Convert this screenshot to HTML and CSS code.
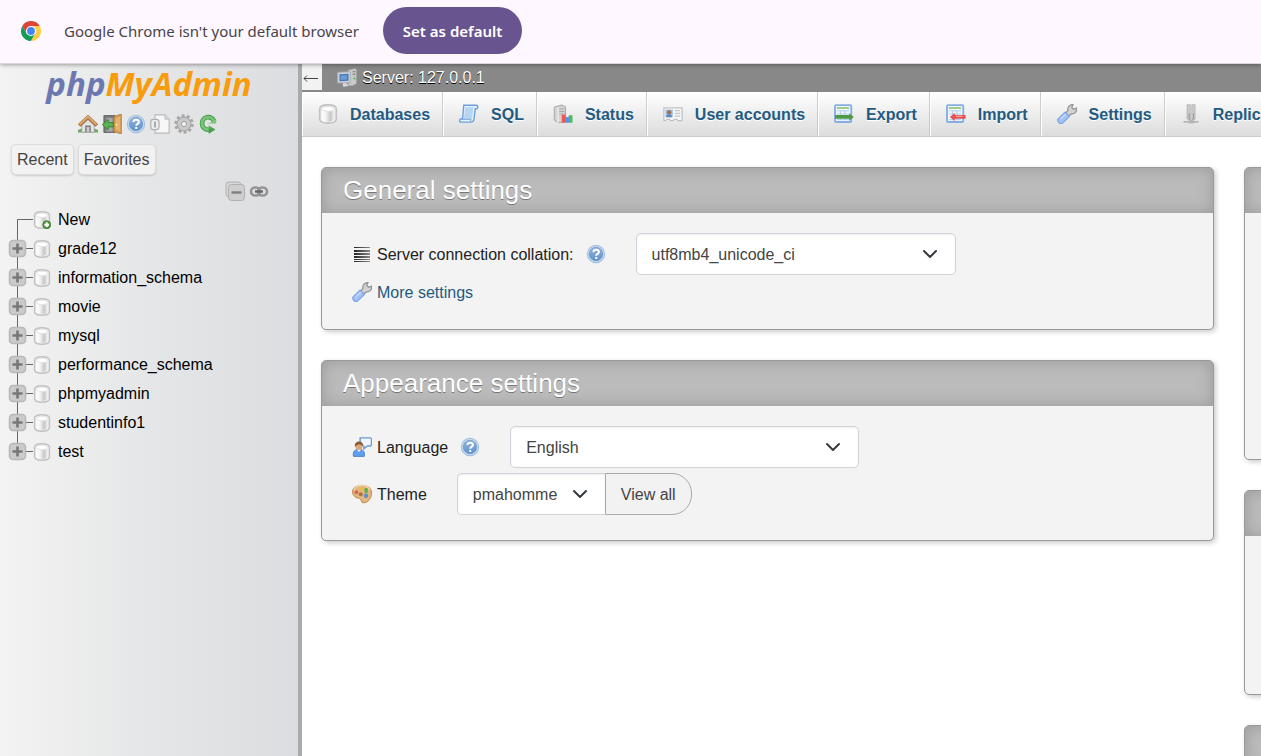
FILE: index.html
```html
<!DOCTYPE html>
<html lang="en">
<head>
<meta charset="utf-8">
<title>127.0.0.1 | phpMyAdmin</title>
<link rel="stylesheet" href="styles.css">
</head>
<body>
<svg class="defs" aria-hidden="true">
  <defs>
    <linearGradient id="gDb" x1="0" x2="1"><stop offset="0" stop-color="#fff"/><stop offset=".35" stop-color="#f0f0f0"/><stop offset=".7" stop-color="#c8c8c8"/><stop offset="1" stop-color="#ececec"/></linearGradient>
    <linearGradient id="gBlue" x1="0" y1="0" x2="0" y2="1"><stop offset="0" stop-color="#8fb4dd"/><stop offset="1" stop-color="#5f92cb"/></linearGradient>
    <linearGradient id="gGreen" x1="0" y1="0" x2="0" y2="1"><stop offset="0" stop-color="#8fd08a"/><stop offset="1" stop-color="#2f8f35"/></linearGradient>
    <linearGradient id="gLines" x1="0" x2="1"><stop offset="0" stop-color="#222"/><stop offset="1" stop-color="#888"/></linearGradient>
    <symbol id="db" viewBox="0 0 16 16"><path d="M1.400 3.600C1.600 1.700 4.500.7 8 .7s6.400 1 6.600 2.900v8.800c-.2 1.900-3.100 2.900-6.600 2.900s-6.400-1-6.600-2.900z" fill="#f2f2f2" stroke="#c2c2c2" stroke-width="1.300"/><path d="M3.200 4.800v7.400c0 1 2.100 2 4.800 2s4.800-1 4.800-2V4.800c-2 1.700-7.600 1.700-9.600 0z" fill="url(#gDb)"/><ellipse cx="8" cy="3.900" rx="4.900" ry="1.900" fill="#fff" stroke="#d4d4d4" stroke-width=".5"/></symbol>
    <symbol id="dbnew" viewBox="0 0 16 16"><use href="#db"/><circle cx="12.200" cy="12.200" r="3.500" fill="#5c9b40" stroke="#39752a" stroke-width=".8"/><path d="M12.200 10.100v4.200M10.100 12.200h4.200" stroke="#fff" stroke-width="1.600"/></symbol>
    <symbol id="home" viewBox="0 0 16 16"><path d="M0 14.800h16v-2l-3-1.300H3l-3 1.300z" fill="#6aab5c"/><path d="M3 7.500 8 3l5 4.500v7H3z" fill="#e3e3e3" stroke="#999" stroke-width=".6"/><path d="M5.800 14.600v-5.400h4.400v5.400z" fill="#777"/><path d="M6.900 14.600v-4.300h2.200v4.300z" fill="#ccc"/><path d="M1 9.200 8 2.700l7 6.500" fill="none" stroke="#a9713c" stroke-width="3"/><path d="M1.300 8.400 8 2.200l6.700 6.200" fill="none" stroke="#dda871" stroke-width="1.400"/></symbol>
    <symbol id="exit" viewBox="0 0 16 16"><path d="M1.500 1.200h9v13.600h-9z" fill="#777" stroke="#666" stroke-width=".7"/><path d="M3.500 3h5v11h-5z" fill="#a8a8a8"/><path d="M15.500 0v16L9.500 14.200V2z" fill="#d79a52" stroke="#b07a3a" stroke-width=".6"/><path d="M14.500 2v12l-3.600-1.200V3.200z" fill="#e4b36f"/><circle cx="11.500" cy="8.500" r=".8" fill="#fff0a8"/><path d="M.3 8.500 5 4.300v2.500h4v3.500H5v2.500z" fill="#5bb254" stroke="#31832b" stroke-width=".7"/></symbol>
    <symbol id="help" viewBox="0 0 16 16"><circle cx="8" cy="8" r="6.900" fill="#cfdff1" stroke="#a3bfdf" stroke-width=".9"/><circle cx="8" cy="8" r="5.400" fill="url(#gBlue)" stroke="#5f8dc2" stroke-width=".5"/><path d="M5.900 6.500c.1-2.700 4.400-2.500 4.400-.1 0 1.500-2.100 1.500-2.100 2.900M8.200 10.400v1.500" fill="none" stroke="#fff" stroke-width="1.600"/></symbol>
    <symbol id="doc" viewBox="0 0 16 16"><path d="M4 .7h8l3.300 3.400v11.200H4z" fill="#f7f7f7" stroke="#b9b9b9" stroke-width=".9"/><path d="M12 .7v3.400h3.300" fill="#ddd" stroke="#b9b9b9" stroke-width=".7"/><rect x=".6" y="4.200" width="6.600" height="8.200" rx="2" fill="#eee" stroke="#b0b0b0"/><path d="M4 6v4.700" stroke="#a8a8a8" stroke-width="1.500"/></symbol>
    <symbol id="gear" viewBox="0 0 16 16"><circle cx="8" cy="8" r="6.600" fill="none" stroke="#a6a6a6" stroke-width="2.400" stroke-dasharray="2.300 1.850"/><circle cx="8" cy="8" r="4" fill="none" stroke="#c9c9c9" stroke-width="3.400"/><circle cx="8" cy="8" r="5.500" fill="none" stroke="#a8a8a8" stroke-width=".9"/><circle cx="8" cy="8" r="2.100" fill="#eee" stroke="#a0a0a0" stroke-width=".8"/></symbol>
    <symbol id="reload" viewBox="0 0 16 16"><path d="M13 6A5 5 0 1 0 8.500 12.500" fill="none" stroke="#3f9a44" stroke-width="3.800"/><path d="M12.800 6A4.900 4.900 0 1 0 8.500 12.300" fill="none" stroke="#7cc578" stroke-width="2.300"/><path d="M7.500 7.500h7v-3l-2 1.500zM8.500 9l5.500 3.300-5.500 3.500z" fill="url(#gGreen)"/></symbol>
    <symbol id="server" viewBox="0 0 16 16"><path d="M9 1.500 14.500.4l1.200 1v11l-3 1.800H9z" fill="#c9c9c9" stroke="#999" stroke-width=".5"/><path d="M12.500 3h2.200M12.500 5h2.200" stroke="#777" stroke-width=".8"/><circle cx="14" cy="8.300" r=".8" fill="#43bb40"/><path d="M.5 3.500 10.500 3v8.500L.5 12z" fill="#d0d5db" stroke="#a5acb3" stroke-width=".7"/><path d="M2 5l7.200-.4v5.600l-7.200.4z" fill="#4679b8"/><path d="M3 6l5-.3v3.500l-5 .3z" fill="#6f9bd2"/><path d="M4.500 12h3l2 2.200-4.500 1z" fill="#d5d5d5"/></symbol>
    <symbol id="sql" viewBox="0 0 16 16"><path d="M3.800 1h10c1.800.1 1.700 3.300-.8 3l-1 8c-.2 2-1 2.500-2.500 2.500H1.300c-1.300-.5-.8-2.700.6-2.700h1z" fill="#e3effc" stroke="#6f9fd8" stroke-width="1.100"/><path d="M5 2.600h6.500l-1.200 9.200H4z" fill="#b7d5f5"/><path d="M2 12.200h7.500c0 1.200-.5 1.700-1.200 1.800" fill="#edf5fe" stroke="#6f9fd8" stroke-width=".8"/></symbol>
    <symbol id="status" viewBox="0 0 16 16"><path d="M1 2.500 7 .8l3 1.400v12L4.500 15 1 12.800z" fill="#d3d3d3" stroke="#a8a8a8" stroke-width=".8"/><path d="M4 2.500V15" stroke="#efefef"/><path d="M5 4h4M5 6h4M5 8h4" stroke="#aaa" stroke-width=".8"/><path d="M7 8.500h3V15H7z" fill="#f0584f"/><path d="M12.600 9h3v6h-3z" fill="#4fbb5c"/><path d="M9.600 10.500h3.200V15H9.600z" fill="#5592ee"/></symbol>
    <symbol id="users" viewBox="0 0 16 16"><path d="M.7 3h14.600v10.300H12l-.8-1H9l-.8 1H6l-.8-1H3l-.8 1H.7z" fill="#f7f7f7" stroke="#c2c2c2"/><path d="M2 4.500h5.800v6H2z" fill="#8fbce9"/><circle cx="4.900" cy="6.600" r="1.700" fill="#a87048"/><path d="M2.700 10.500c0-3 4.400-3 4.400 0z" fill="#5b82ba"/><path d="M9.500 5.300h4.200M9.500 7.500h4.200M9.500 9.700h4.200" stroke="#c0c6cc"/></symbol>
    <symbol id="sheet" viewBox="0 0 16 16"><rect x=".8" y=".9" width="13" height="13.500" rx=".8" fill="#f0f6fd" stroke="#86aee5" stroke-width="1.500"/><path d="M2.300 3.200h9.800" stroke="#92c270" stroke-width="1.300"/><path d="M2.500 5.500h9.500M2.500 8h9.500M2.500 12.500h9.500M5.200 5v8M8.700 5v8" stroke="#b4cdeb" stroke-width=".8"/></symbol>
    <symbol id="export" viewBox="0 0 16 16"><use href="#sheet"/><path d="M.8 8.800h11.400V7.300l3.600 3-3.600 3v-1.600H.8z" fill="#4e9a43"/></symbol>
    <symbol id="import" viewBox="0 0 16 16"><use href="#sheet"/><path d="M15.700 8.800v2.900H7v1.800l-4-3.200 4-3.200v1.700z" fill="#e95050"/><path d="M8 9.900h5" stroke="#f5a09c"/></symbol>
    <symbol id="wrench" viewBox="0 0 16 16"><path d="m7 7.300 1.700-2.200C8.300 2.500 10 .4 12.800.4l-1 2.300 1.500 1.500 2.300-.9c.5 2.700-1.300 4.800-4 4.600L9.300 9.600z" fill="#d2d2d2" stroke="#939393"/><path d="M1 11.700 6.500 6.500l3.400 3.400-5.200 5.200c-2 1.700-5.300-1.300-3.700-3.400z" fill="#a4c1f3" stroke="#7ea2e4" stroke-width=".9"/><path d="m2.800 12 4.200-3.800" stroke="#c4d8fc" stroke-width="1.300"/></symbol>
    <symbol id="replic" viewBox="0 0 16 16"><path d="M4.800.5h2.700v11.700H4.800zM8.600.5h2.700v11.700H8.600z" fill="#c9c9c9" stroke="#acacac" stroke-width=".5"/><path d="M6.500 7.500v4.500l1.700 1.200L10 12V7.500" fill="none" stroke="#969696" stroke-width=".8"/><path d="M2 14.300h12" stroke="#b4b4b4" stroke-width="1.400"/><path d="M6 13h4.500v2.500H6z" fill="#b4b4b4"/></symbol>
    <symbol id="lines" viewBox="0 0 16 16"><path d="M1.600 2.400h12.800v.8H1.600zM1.600 4.800h12.800v1.600H1.600zM1.600 7.200h12.800v1.600H1.600zM1.600 9.600h12.800v1.600H1.600zM1.600 12h12.800v.8H1.600zM1.600 13.600h12.800v.8H1.600z" fill="url(#gLines)"/></symbol>
    <symbol id="lang" viewBox="0 0 16 16"><path d="M6.500.7h8.200q1 .3.900 1.300v4q-.2 1-1.200 1.200h-2L9.500 9.500V7.300L6.500 6z" fill="#eef5ff" stroke="#6c99d0" stroke-width="1.100"/><path d="M1.200 15.500C.3 11.500 2.500 9.800 5.500 9.800s5.200 1.700 4.300 5.700z" fill="#5f9fed" stroke="#3a74bf" stroke-width=".6"/><path d="m4 10 1.500 2L7.200 10z" fill="#fff"/><circle cx="5.600" cy="7.500" r="2.800" fill="#dba87b"/><path d="M2.300 7.700C1.700 2.800 8.800 2.200 9 7 7 6.700 6 5.500 5 6 4 6.300 3.200 7 2.300 7.700z" fill="#8c5a32"/></symbol>
    <symbol id="theme" viewBox="0 0 16 16"><path d="M.4 5.300C2-.2 13.800-.6 15.500 5.500c.8 5-2.200 9.700-6.500 9.500-2.500-.2-1-3.300-3-3.500C4 11.600.1 10 .4 5.300z" fill="#e2b67f" stroke="#bd8751" stroke-width=".8"/><path d="M1.500 5C4-.3 12 0 14.300 5" fill="none" stroke="#f3d9b1"/><circle cx="3.500" cy="6.500" r="1.500" fill="#e26055"/><circle cx="7.400" cy="3.800" r="1.300" fill="#efbd3e"/><rect x="10" y="3.200" width="2.600" height="4" rx="1" fill="#5cad4e"/><circle cx="7" cy="8.200" r="1.600" fill="#a87347"/><circle cx="11.200" cy="9.300" r="1.800" fill="#5a91c6"/></symbol>
    <symbol id="plus" viewBox="0 0 33 29"><path d="M26 14.500h7" stroke="#666"/><rect x="9.500" y="6.500" width="16" height="16" rx="3.500" fill="#cbcbcb" stroke="#b8b8b8" stroke-width="1.500"/><path d="M17.500 9.500v10M12.500 14.500h10" stroke="#777" stroke-width="2.600"/></symbol>
  </defs>
</svg>

<div class="infobar">
  <svg class="chrome" viewBox="0 0 48 48" aria-hidden="true"><path d="M5 13A22 22 0 0 0 24 46l9.500-16.500H14.500z" fill="#0f9d58"/><path d="M43 13A22 22 0 0 1 24 46L33.500 29.500 24 13z" fill="#ffcd40"/><path d="M24 13h19A22 22 0 0 0 5 13l9.500 16.500z" fill="#db4437"/><circle cx="24" cy="24" r="11" fill="#fff"/><circle cx="24" cy="24" r="8.500" fill="#4285f4"/></svg>
  <span class="infotext">Google Chrome isn't your default browser</span>
  <button class="default-btn" type="button">Set as default</button>
</div>

<div class="app">
  <aside class="nav">
    <a class="logo" href="#"><span class="logo-php">php</span><span class="logo-my">MyAdmin</span></a>
    <div class="nav-icons">
      <a href="#" aria-label="Home"><svg class="icon"><use href="#home"/></svg></a>
      <a href="#" aria-label="Log out"><svg class="icon"><use href="#exit"/></svg></a>
      <a href="#" aria-label="Documentation"><svg class="icon"><use href="#help"/></svg></a>
      <a href="#" aria-label="MariaDB documentation"><svg class="icon"><use href="#doc"/></svg></a>
      <a href="#" aria-label="Panel settings"><svg class="icon"><use href="#gear"/></svg></a>
      <a href="#" aria-label="Reload"><svg class="icon"><use href="#reload"/></svg></a>
    </div>
    <div class="quick">
      <button type="button" class="quick-btn">Recent</button>
      <button type="button" class="quick-btn">Favorites</button>
    </div>
    <div class="tree-tools">
      <a href="#" aria-label="Collapse all"><svg class="icon" viewBox="0 0 20 20"><rect x="1" y="1" width="15" height="15" rx="3" fill="#d8d8d8" stroke="#b0b0b0"/><rect x="3.500" y="3.500" width="16" height="16" rx="3" fill="#cecece" stroke="#b0b0b0"/><path d="M6.500 11.500h10" stroke="#808080" stroke-width="2.400"/></svg></a>
      <a href="#" aria-label="Unlink from main panel"><svg class="icon" viewBox="0 0 20 20"><rect x="2" y="6.500" width="9" height="8" rx="4" fill="none" stroke="#949494" stroke-width="2.600"/><rect x="9" y="6.500" width="9" height="8" rx="4" fill="none" stroke="#949494" stroke-width="2.600"/><path d="M6 10.500h8" stroke="#666" stroke-width="2.400"/></svg></a>
    </div>
    <ul class="tree">
      <li class="node"><svg class="branch" viewBox="0 0 33 29"><path d="M33 14.500H17.500V29" fill="none" stroke="#666"/></svg><svg class="dbicon"><use href="#dbnew"/></svg><a href="#">New</a></li>
      <li class="node"><button type="button" class="toggle" aria-label="Expand grade12"><svg class="branch" viewBox="0 0 33 29"><path d="M17.500 0v29" stroke="#666"/><use href="#plus"/></svg></button><svg class="dbicon"><use href="#db"/></svg><a href="#">grade12</a></li>
      <li class="node"><button type="button" class="toggle" aria-label="Expand information_schema"><svg class="branch" viewBox="0 0 33 29"><path d="M17.500 0v29" stroke="#666"/><use href="#plus"/></svg></button><svg class="dbicon"><use href="#db"/></svg><a href="#">information_schema</a></li>
      <li class="node"><button type="button" class="toggle" aria-label="Expand movie"><svg class="branch" viewBox="0 0 33 29"><path d="M17.500 0v29" stroke="#666"/><use href="#plus"/></svg></button><svg class="dbicon"><use href="#db"/></svg><a href="#">movie</a></li>
      <li class="node"><button type="button" class="toggle" aria-label="Expand mysql"><svg class="branch" viewBox="0 0 33 29"><path d="M17.500 0v29" stroke="#666"/><use href="#plus"/></svg></button><svg class="dbicon"><use href="#db"/></svg><a href="#">mysql</a></li>
      <li class="node"><button type="button" class="toggle" aria-label="Expand performance_schema"><svg class="branch" viewBox="0 0 33 29"><path d="M17.500 0v29" stroke="#666"/><use href="#plus"/></svg></button><svg class="dbicon"><use href="#db"/></svg><a href="#">performance_schema</a></li>
      <li class="node"><button type="button" class="toggle" aria-label="Expand phpmyadmin"><svg class="branch" viewBox="0 0 33 29"><path d="M17.500 0v29" stroke="#666"/><use href="#plus"/></svg></button><svg class="dbicon"><use href="#db"/></svg><a href="#">phpmyadmin</a></li>
      <li class="node"><button type="button" class="toggle" aria-label="Expand studentinfo1"><svg class="branch" viewBox="0 0 33 29"><path d="M17.500 0v29" stroke="#666"/><use href="#plus"/></svg></button><svg class="dbicon"><use href="#db"/></svg><a href="#">studentinfo1</a></li>
      <li class="node"><button type="button" class="toggle" aria-label="Expand test"><svg class="branch" viewBox="0 0 33 29"><path d="M17.500 0v14" stroke="#666"/><use href="#plus"/></svg></button><svg class="dbicon"><use href="#db"/></svg><a href="#">test</a></li>
    </ul>
  </aside>

  <main class="main">
    <div class="serverbar">
      <button type="button" class="collapse" aria-label="Hide panel"><svg class="arrow" viewBox="0 0 20 20"><path d="M2 10.500h14M5 7.500l-3 3 3 3" fill="none" stroke="#444"/></svg></button>
      <a class="crumb" href="#"><svg class="icon"><use href="#server"/></svg>Server: 127.0.0.1</a>
    </div>
    <nav class="tabs">
      <a class="tab" href="#"><svg class="icon"><use href="#db"/></svg><span class="tab-text">Databases</span></a>
      <a class="tab" href="#"><svg class="icon"><use href="#sql"/></svg><span class="tab-text">SQL</span></a>
      <a class="tab" href="#"><svg class="icon"><use href="#status"/></svg><span class="tab-text">Status</span></a>
      <a class="tab" href="#"><svg class="icon"><use href="#users"/></svg><span class="tab-text">User accounts</span></a>
      <a class="tab" href="#"><svg class="icon"><use href="#export"/></svg><span class="tab-text">Export</span></a>
      <a class="tab" href="#"><svg class="icon"><use href="#import"/></svg><span class="tab-text">Import</span></a>
      <a class="tab" href="#"><svg class="icon"><use href="#wrench"/></svg><span class="tab-text">Settings</span></a>
      <a class="tab" href="#"><svg class="icon"><use href="#replic"/></svg><span class="tab-text">Replication</span></a>
    </nav>
    <div class="columns">
      <div class="col col-left">
        <section class="card">
          <h2 class="card-title">General settings</h2>
          <div class="card-body">
            <div class="row">
              <svg class="icon"><use href="#lines"/></svg>
              <label class="label" for="collation">Server connection collation:</label>
              <a class="help" href="#" aria-label="Collation help"><svg class="icon"><use href="#help"/></svg></a>
              <select class="select select-collation" id="collation"><option>utf8mb4_unicode_ci</option></select>
            </div>
            <div class="row">
              <svg class="icon"><use href="#wrench"/></svg>
              <a class="label link" href="#">More settings</a>
            </div>
          </div>
        </section>
        <section class="card">
          <h2 class="card-title">Appearance settings</h2>
          <div class="card-body">
            <div class="row">
              <svg class="icon"><use href="#lang"/></svg>
              <label class="label" for="language">Language</label>
              <a class="help" href="#" aria-label="Language help"><svg class="icon"><use href="#help"/></svg></a>
              <select class="select select-language" id="language"><option>English</option></select>
            </div>
            <div class="row">
              <svg class="icon"><use href="#theme"/></svg>
              <label class="label" for="theme-select">Theme</label>
              <div class="group">
                <select class="select select-theme" id="theme-select"><option>pmahomme</option></select>
                <button type="button" class="view-all">View all</button>
              </div>
            </div>
          </div>
        </section>
      </div>
      <div class="col col-right">
        <section class="card"><div class="card-title"></div><div class="card-body body-tall"></div></section>
        <section class="card"><div class="card-title"></div><div class="card-body body-mid"></div></section>
        <section class="card"><div class="card-title"></div><div class="card-body body-mid"></div></section>
      </div>
    </div>
  </main>
</div>
</body>
</html>
```

FILE: styles.css
```css
* { box-sizing: border-box; }
body {
  margin: 0;
  height: 100vh;
  display: flex;
  flex-direction: column;
  overflow: hidden;
  background: #fff;
  color: #222;
  font: 16px/24px "Liberation Sans", Arial, sans-serif;
}
a { color: inherit; text-decoration: none; }
button, select { font: inherit; color: inherit; margin: 0; }
svg { display: block; flex: none; }
.defs { position: absolute; width: 0; height: 0; }
.icon { width: 20px; height: 20px; }

.infobar {
  position: relative;
  z-index: 1;
  flex: none;
  display: flex;
  align-items: center;
  height: 64px;
  padding: 0 20px 2px;
  background: #fef7ff;
  border-bottom: 1px solid #ddd5de;
  box-shadow: 0 1px 4px rgba(0, 0, 0, .35);
  font-family: "Noto Sans", "Open Sans", sans-serif;
  font-size: 15px;
  color: #474549;
}
.chrome { width: 22px; height: 22px; }
.infotext { margin: 0 24px 0 22px; }
.default-btn {
  height: 47px;
  padding: 0 20px;
  border: 0;
  border-radius: 24px;
  background: #68548e;
  color: #fff;
  font-weight: 600;
}

.app { flex: 1; display: flex; min-height: 0; }
.nav {
  flex: none;
  width: 302px;
  border-right: 4px solid #aaa;
  background: linear-gradient(to right, #f3f3f3, #e5e6e7 50%, #dcdde0);
  overflow: hidden;
}
.logo {
  display: flex;
  justify-content: center;
  font: italic 700 33px/40px "Open Sans", sans-serif;
}
.logo-php { color: #6c78af; }
.logo-my { color: #f89c0e; }
.nav-icons { display: flex; justify-content: center; gap: 4px; padding: 10px 2px 0 0; }
.quick { display: flex; gap: 4px; padding: 10px 11px 0; }
.quick-btn {
  height: 31px;
  padding: 0 5px;
  background: #f2f2f2;
  border: 1px solid #ddd;
  border-radius: 5px;
  box-shadow: 0 1px 2px rgba(0, 0, 0, .15);
  color: #444;
}
.tree-tools { display: flex; justify-content: flex-end; gap: 4px; padding: 6px 29px 0 0; }
.tree { margin: 4px 0 0; padding: 0; list-style: none; color: #000; }
.node { display: flex; align-items: center; height: 29px; }
.branch { width: 33px; height: 29px; }
.toggle { padding: 0; border: 0; background: none; }
.dbicon { width: 18px; height: 18px; margin-right: 7px; }

.main { flex: 1; min-width: 0; overflow: hidden; }
.serverbar { display: flex; align-items: flex-start; height: 28px; background: #888; }
.collapse { height: 26px; width: 20px; padding: 2px 0 0; border: 0; background: #f2f2f2; }
.arrow { width: 20px; height: 20px; }
.crumb {
  display: flex;
  align-items: center;
  gap: 5px;
  height: 28px;
  margin-left: 15px;
  color: #fff;
  text-shadow: 0 1px 0 #000;
}
.tabs {
  display: flex;
  height: 45px;
  border-bottom: 1px solid #ccc;
  background: linear-gradient(#fff, #dcdcdc);
  font-weight: bold;
  color: #235a81;
}
.tab {
  flex: none;
  display: flex;
  align-items: center;
  gap: 12px;
  padding: 0 12px 0 15px;
  border-right: 1px solid #ccc;
  border-left: 1px solid #fff;
  text-shadow: 0 1px 0 #fff;
}
.tab-text { padding-top: 2px; }

.columns { display: flex; width: 165%; margin-left: 4px; padding-top: 30px; }
.col { flex: none; display: flex; flex-direction: column; gap: 30px; padding: 0 15px; }
.col-left { width: calc(100% * 7 / 12); }
.col-right { width: calc(100% * 5 / 12); }
.card {
  overflow: hidden;
  border: 1px solid #999;
  border-radius: 5px;
  background: #f3f3f3;
  box-shadow: 2px 2px 5px #ccc;
}
.card-title {
  min-height: 45px;
  margin: 0;
  padding: 0 21px;
  background: #bbb;
  box-shadow: inset 0 0 15px #999;
  color: #fff;
  font-size: 26px;
  font-weight: normal;
  line-height: 45px;
  text-shadow: 0 1px 0 #777;
}
.card-body { display: flex; flex-direction: column; gap: 5px; padding: 20px 30px 25px; }
.body-tall { height: 246px; }
.body-mid { height: 158px; }
.row { display: flex; align-items: center; }
.label { margin-left: 5px; line-height: 22px; padding-top: 2px; }
.link { color: #235a81; }
.help { margin-left: 12px; }
.select {
  appearance: none;
  height: 42px;
  margin-left: 30px;
  padding: 1px 40px 0 15px;
  border: 1px solid #ced4da;
  border-radius: 5px;
  background: #fff url("data:image/svg+xml,%3Csvg xmlns='http://www.w3.org/2000/svg' viewBox='0 0 16 16'%3E%3Cpath fill='none' stroke='%23343a40' stroke-width='2' stroke-linecap='round' stroke-linejoin='round' d='M2 5l6 6 6-6'/%3E%3C/svg%3E") no-repeat right 17px center / 16px 16px;
  box-shadow: inset 0 1px 2px rgba(0, 0, 0, .075);
  color: #444;
}
.select-collation { width: 320px; }
.select-language { width: 349px; }
.select-theme { width: 148px; border-radius: 5px 0 0 5px; border-right: 0; }
.group { display: flex; }
.view-all {
  padding: 1px 15px 0;
  border: 1px solid #aaa;
  border-radius: 0 20px 20px 0;
  background: #f2f2f2;
  color: #444;
}
```
